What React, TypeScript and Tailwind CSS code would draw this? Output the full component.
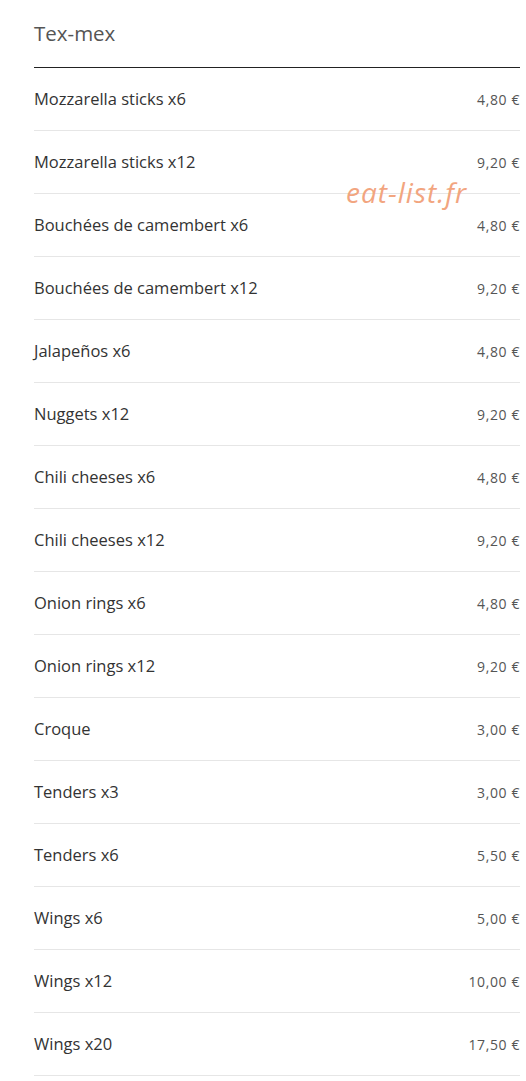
import React from "react";

const items: [string, string][] = [
  ["Mozzarella sticks x6", "4,80 €"],
  ["Mozzarella sticks x12", "9,20 €"],
  ["Bouchées de camembert x6", "4,80 €"],
  ["Bouchées de camembert x12", "9,20 €"],
  ["Jalapeños x6", "4,80 €"],
  ["Nuggets x12", "9,20 €"],
  ["Chili cheeses x6", "4,80 €"],
  ["Chili cheeses x12", "9,20 €"],
  ["Onion rings x6", "4,80 €"],
  ["Onion rings x12", "9,20 €"],
  ["Croque", "3,00 €"],
  ["Tenders x3", "3,00 €"],
  ["Tenders x6", "5,50 €"],
  ["Wings x6", "5,00 €"],
  ["Wings x12", "10,00 €"],
  ["Wings x20", "17,50 €"],
];

export default function App() {
  return (
    <div
      className="relative bg-white min-h-[1081px] pl-[34px] pr-[6px]"
      style={{ fontFamily: '"Open Sans", "Noto Sans", sans-serif' }}
    >
      <div className="h-[68px] flex items-center border-b border-[#222]">
        <h2 className="text-[20.5px] text-[#555] leading-none">Tex-mex</h2>
      </div>
      {items.map(([name, price]) => (
        <div
          key={name}
          className="h-[63px] flex items-center justify-between border-b border-[#e6e6e6]"
        >
          <span className="text-[16.5px] text-[#333]">{name}</span>
          <span className="text-[14px] tracking-[0.6px] text-[#555]">{price}</span>
        </div>
      ))}
      <div className="absolute left-[346px] top-[178px] text-[28px] tracking-[1px] italic text-[#f2a57f] leading-none pointer-events-none">
        eat-list.fr
      </div>
    </div>
  );
}
